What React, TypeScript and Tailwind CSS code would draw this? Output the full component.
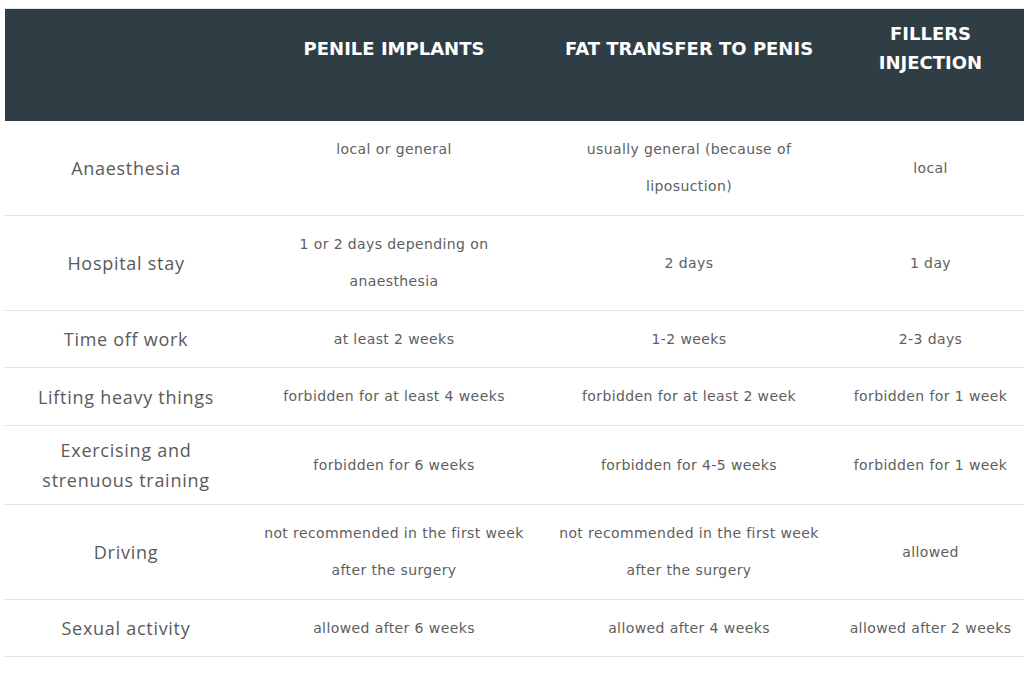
import React from "react";

type Row = {
  label: string[];
  cells: string[][];
  h: string;
};

const rows: Row[] = [
  {
    label: ["Anaesthesia"],
    cells: [["local or general", "\u00a0"], ["usually general (because of", "liposuction)"], ["local"]],
    h: "h-[95px]",
  },
  {
    label: ["Hospital stay"],
    cells: [["1 or 2 days depending on", "anaesthesia"], ["2 days"], ["1 day"]],
    h: "h-[95px]",
  },
  {
    label: ["Time off work"],
    cells: [["at least 2 weeks"], ["1-2 weeks"], ["2-3 days"]],
    h: "h-[57px]",
  },
  {
    label: ["Lifting heavy things"],
    cells: [["forbidden for at least 4 weeks"], ["forbidden for at least 2 week"], ["forbidden for 1 week"]],
    h: "h-[58px]",
  },
  {
    label: ["Exercising and", "strenuous training"],
    cells: [["forbidden for 6 weeks"], ["forbidden for 4-5 weeks"], ["forbidden for 1 week"]],
    h: "h-[79px]",
  },
  {
    label: ["Driving"],
    cells: [
      ["not recommended in the first week", "after the surgery"],
      ["not recommended in the first week", "after the surgery"],
      ["allowed"],
    ],
    h: "h-[95px]",
  },
  {
    label: ["Sexual activity"],
    cells: [["allowed after 6 weeks"], ["allowed after 4 weeks"], ["allowed after 2 weeks"]],
    h: "h-[57px]",
  },
];

const cols = "grid grid-cols-[242px_294px_296px_187px]";

function HeadCell({ lines }: { lines: string[] }) {
  return (
    <div className="flex flex-col items-center justify-start pt-[10px] text-center text-white font-bold text-[18px] leading-[29px] font-['DejaVu_Sans',sans-serif]">
      {lines.length === 1 ? <span className="mt-[15px]">{lines[0]}</span> : lines.map(l => <span key={l}>{l}</span>)}
    </div>
  );
}

export default function App() {
  return (
    <div className="bg-white w-[1024px] h-[674px] overflow-hidden pt-[8px] pl-[5px]">
      <div className="w-[1019px] border-t border-[#dfe3e5]">
        {/* header */}
        <div className={`${cols} h-[112px] bg-[#2f3d44]`}>
          <div />
          <HeadCell lines={["PENILE IMPLANTS"]} />
          <HeadCell lines={["FAT TRANSFER TO PENIS"]} />
          <HeadCell lines={["FILLERS", "INJECTION"]} />
        </div>

        {rows.map((r, i) => (
          <div key={i} className={`${cols} ${r.h} border-b border-[#e2e2e2]`}>
            <div className="flex flex-col items-center justify-center text-center text-[18px] leading-[30px] tracking-[0.04em] text-[#5a5a5a] font-['Open_Sans',sans-serif]">
              {r.label.map(l => <span key={l}>{l}</span>)}
            </div>
            {r.cells.map((c, j) => (
              <div key={j} className="flex flex-col items-center justify-center text-center text-[14px] leading-[37px] tracking-[0.4px] text-[#5e5e5e] font-['DejaVu_Sans',sans-serif]">
                {c.map((l, k) => <span key={k}>{l}</span>)}
              </div>
            ))}
          </div>
        ))}
      </div>
    </div>
  );
}
